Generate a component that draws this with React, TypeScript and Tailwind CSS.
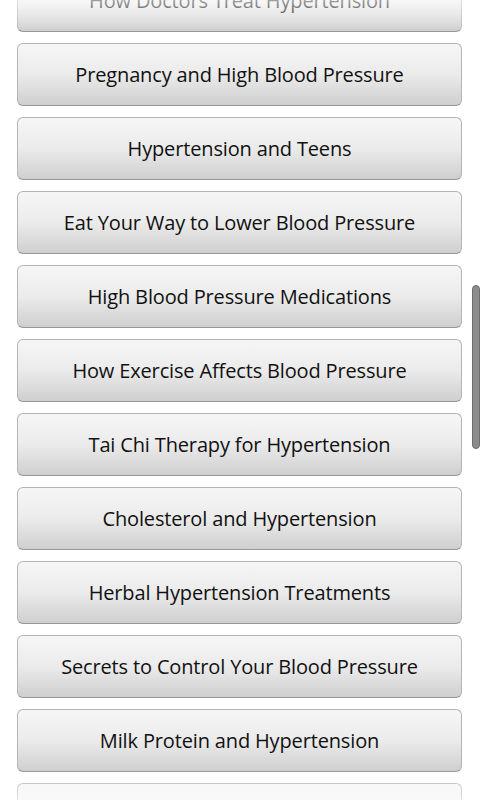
import React from "react";

const items = [
  "How Doctors Treat Hypertension",
  "Pregnancy and High Blood Pressure",
  "Hypertension and Teens",
  "Eat Your Way to Lower Blood Pressure",
  "High Blood Pressure Medications",
  "How Exercise Affects Blood Pressure",
  "Tai Chi Therapy for Hypertension",
  "Cholesterol and Hypertension",
  "Herbal Hypertension Treatments",
  "Secrets to Control Your Blood Pressure",
  "Milk Protein and Hypertension",
  "Sodium and Hypertension",
];

export default function App() {
  return (
    <div
      className="relative h-[800px] w-[480px] overflow-hidden bg-white"
      style={{ fontFamily: '"Open Sans", "Noto Sans", sans-serif' }}
    >
      <div className="-mt-[31px] flex flex-col gap-[11px] pl-[17px]">
        {items.map((t) => (
          <button
            key={t}
            className="flex h-[63px] w-[445px] items-center justify-center rounded-[6px] border border-[#b4b4b4] border-b-[#979797] bg-gradient-to-b from-[#f6f6f6] via-[#ebebeb] to-[#cfcfcf] pt-[1px] text-[20px] tracking-[-0.15px] text-[#111111]"
          >
            {t}
          </button>
        ))}
      </div>
      <div className="pointer-events-none absolute left-0 top-0 h-[30px] w-full bg-gradient-to-b from-[rgba(255,255,255,0.6)] to-transparent" />
      <div className="pointer-events-none absolute bottom-0 left-0 h-[30px] w-full bg-gradient-to-t from-[rgba(255,255,255,0.6)] to-transparent" />
      <div className="absolute left-[472px] top-[285px] h-[164px] w-[8px] rounded-[4px] border border-[#6e6e6e] bg-[#8c8c8c]" />
    </div>
  );
}
